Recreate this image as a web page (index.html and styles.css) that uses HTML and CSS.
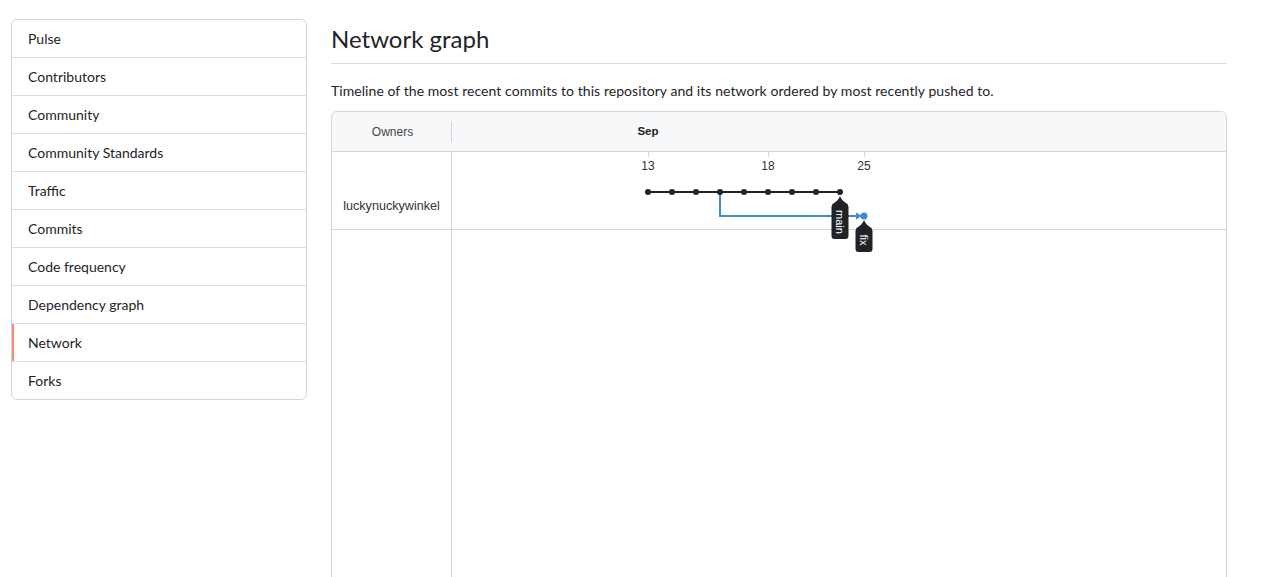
FILE: index.html
```html
<!DOCTYPE html>
<html lang="en">
<head>
<meta charset="utf-8">
<title>Network graph</title>
<link rel="stylesheet" href="styles.css">
</head>
<body>
<div class="layout">
  <nav class="menu">
    <a class="menu-item">Pulse</a>
    <a class="menu-item">Contributors</a>
    <a class="menu-item">Community</a>
    <a class="menu-item">Community Standards</a>
    <a class="menu-item">Traffic</a>
    <a class="menu-item">Commits</a>
    <a class="menu-item">Code frequency</a>
    <a class="menu-item">Dependency graph</a>
    <a class="menu-item selected">Network</a>
    <a class="menu-item">Forks</a>
  </nav>
  <main class="content">
    <h2 class="title">Network graph</h2>
    <p class="desc">Timeline of the most recent commits to this repository and its network ordered by most recently pushed to.</p>
    <div class="network">
      <div class="net-head">
        <div class="owners-head">Owners</div>
        <div class="months"><span class="month">Sep</span></div>
      </div>
      <div class="net-body">
        <div class="owner-col">
          <div class="owner-cell">luckynuckywinkel</div>
        </div>
        <div class="graph-col">
          <div class="graph-row">
            <svg class="graph" width="774" height="110" viewBox="0 -1 774 110">
              <g stroke="#d8d8d8" stroke-width="1">
                <line x1="196.5" y1="-1" x2="196.5" y2="4"/>
                <line x1="316.5" y1="-1" x2="316.5" y2="4"/>
                <line x1="412.5" y1="-1" x2="412.5" y2="4"/>
              </g>
              <g class="dates" font-family="Liberation Sans, Arial, sans-serif" font-size="12" fill="#333" text-anchor="middle">
                <text x="196" y="17">13</text>
                <text x="316" y="17">18</text>
                <text x="412" y="17">25</text>
              </g>
              <path d="M268 39 V63 H405" fill="none" stroke="#3b8dcf" stroke-width="2"/>
              <path d="M404 59.5 L410 63 L404 66.5 Z" fill="#3b8dcf"/>
              <circle cx="412" cy="63" r="3.5" fill="#3b8dcf"/>
              <line x1="196" y1="39" x2="388" y2="39" stroke="#222" stroke-width="2"/>
              <g fill="#222">
                <circle cx="196" cy="39" r="3"/>
                <circle cx="220" cy="39" r="3"/>
                <circle cx="244" cy="39" r="3"/>
                <circle cx="268" cy="39" r="3"/>
                <circle cx="292" cy="39" r="3"/>
                <circle cx="316" cy="39" r="3"/>
                <circle cx="340" cy="39" r="3"/>
                <circle cx="364" cy="39" r="3"/>
                <circle cx="388" cy="39" r="3"/>
              </g>
              <path d="M388 43 Q390 48 394 50 Q396.5 51 396.5 54 V83 Q396.5 86 393.5 86 H382.5 Q379.5 86 379.5 83 V54 Q379.5 51 382 50 Q386 48 388 43 Z" fill="#1f2328"/>
              <text class="tag" x="388" y="69" transform="rotate(90 388 69)">main</text>
              <path d="M412 67 Q414 72 418 74 Q420.5 75 420.5 78 V96 Q420.5 99 417.5 99 H406.5 Q403.5 99 403.5 96 V78 Q403.5 75 406 74 Q410 72 412 67 Z" fill="#1f2328"/>
              <text class="tag" x="412" y="87" transform="rotate(90 412 87)">fix</text>
            </svg>
          </div>
        </div>
      </div>
    </div>
  </main>
</div>
</body>
</html>
```

FILE: styles.css
```css
* { box-sizing: border-box; }

body {
  margin: 0;
  font-family: Lato, "Noto Sans", "Liberation Sans", sans-serif;
  font-size: 14px;
  color: #1f2328;
  background: #ffffff;
}

.layout {
  display: flex;
  gap: 24px;
  padding: 19px 0 0 11px;
}

.menu {
  width: 296px;
  flex: none;
  align-self: flex-start;
  display: flex;
  flex-direction: column;
  border: 1px solid #d0d7de;
  border-radius: 6px;
  overflow: hidden;
}

.menu-item {
  display: flex;
  align-items: center;
  height: 38px;
  padding: 0 16px;
  border-top: 1px solid #d8dee4;
  color: #1f2328;
  line-height: 21px;
}

.menu-item:first-child {
  border-top: none;
  height: 37px;
}

.menu-item.selected {
  box-shadow: inset 2px 0 0 #fd8c73;
}

.content {
  width: 896px;
  flex: none;
}

.title {
  margin: 0;
  padding: 2px 0 6px;
  font-size: 24px;
  font-weight: 400;
  line-height: 36px;
  border-bottom: 1px solid #d8dee4;
}

.desc {
  margin: 16px 0 10px;
  line-height: 21px;
  letter-spacing: 0.06px;
}

.network {
  border: 1px solid #d0d7de;
  border-radius: 6px 6px 0 0;
  height: 480px;
  display: flex;
  flex-direction: column;
}

.net-head {
  display: flex;
  align-items: center;
  height: 40px;
  flex: none;
  background: #f6f8fa;
  border-bottom: 1px solid #d0d7de;
  border-radius: 6px 6px 0 0;
  font-family: "Liberation Sans", Arial, sans-serif;
  font-size: 12px;
  color: #444;
}

.owners-head {
  width: 120px;
  height: 20px;
  display: flex;
  align-items: center;
  justify-content: center;
  border-right: 1px solid #d0d7de;
  padding-left: 2px;
}

.months {
  flex: 1;
  position: relative;
  height: 20px;
}

.month {
  position: absolute;
  left: 196px;
  top: 3px;
  transform: translateX(-50%);
  font-weight: 700;
  color: #222;
  font-size: 11.5px;
}

.net-body {
  flex: 1;
  display: flex;
}

.owner-col {
  width: 120px;
  flex: none;
  border-right: 1px solid #d0d7de;
}

.owner-cell {
  height: 78px;
  border-bottom: 1px solid #d0d7de;
  display: flex;
  justify-content: center;
  align-items: flex-end;
  padding-bottom: 16px;
  font-family: "Liberation Sans", Arial, sans-serif;
  font-size: 12.6px;
  color: #333;
}

.graph-col {
  flex: 1;
}

.graph-row {
  height: 78px;
  border-bottom: 1px solid #d0d7de;
}

.graph {
  display: block;
  overflow: visible;
  position: relative;
  z-index: 1;
}

.tag {
  font-family: "Liberation Sans", Arial, sans-serif;
  font-size: 11px;
  fill: #ffffff;
  text-anchor: middle;
  dominant-baseline: central;
}
```
